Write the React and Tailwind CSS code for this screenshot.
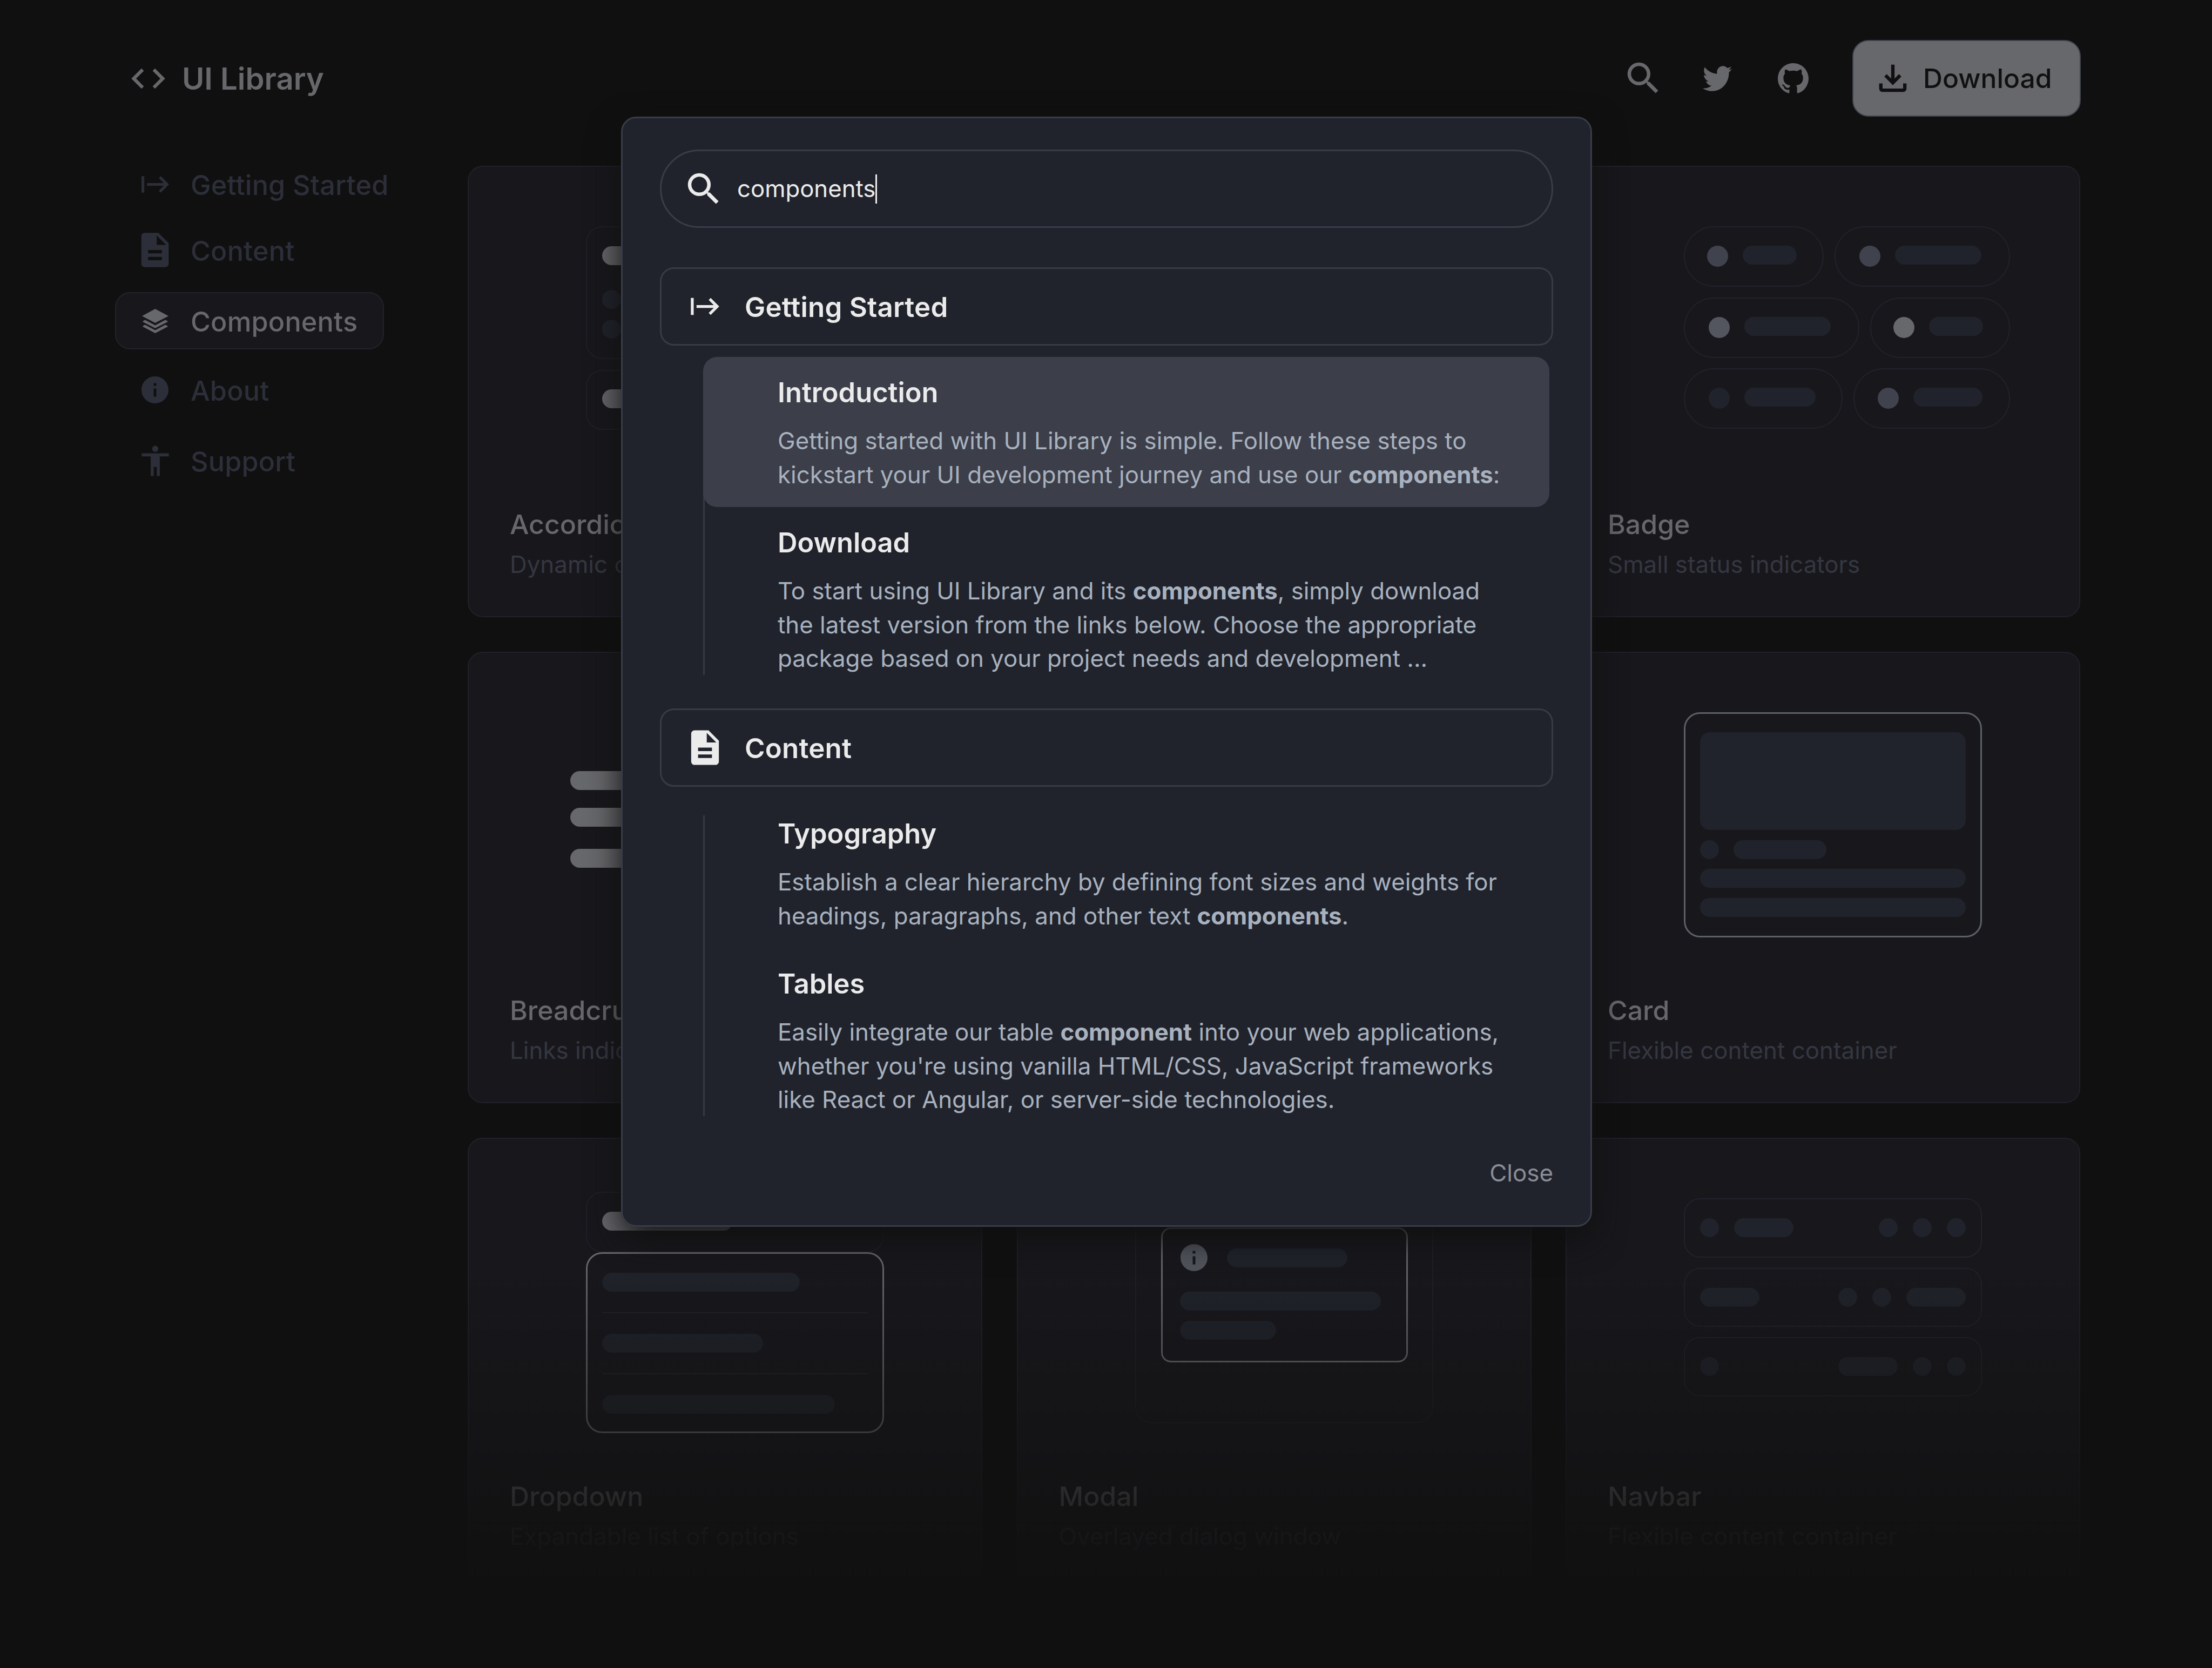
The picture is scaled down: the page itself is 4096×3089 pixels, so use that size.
import React from "react";
import {
  MdAccessibility,
  MdCode,
  MdDescription,
  MdInfo,
  MdOutlineFileDownload,
  MdSearch,
} from "react-icons/md";
import { FaTwitter } from "react-icons/fa";
import { BsGithub } from "react-icons/bs";

const LayersIcon = ({ className }) => (
  <svg viewBox="0 0 173 158" fill="currentColor" className={className}>
    <path d="M86 0 173 46 86 91 0 46z" />
    <path d="M20 72 86 107 152 72 168 80V84L86 126 5 84V80z" />
    <path d="M20 104 86 139 152 104 168 112V116L86 158 5 116V112z" />
  </svg>
);

const StartIcon = ({ className }) => (
  <svg viewBox="0 0 24 24" fill="currentColor" className={className}>
    <path d="M14.59 7.41 18.17 11H6v2h12.17l-3.59 3.59L16 18l6-6-6-6-1.41 1.41zM2 6v12h2V6H2z" />
  </svg>
);

const navItems = [
  { name: "Getting Started", icon: <StartIcon className="size-[61px]" />, className: "" },
  { name: "Content", icon: <MdDescription className="size-[76px]" />, className: "mt-[16px]" },
  { name: "Components", icon: <LayersIcon className="w-[49px] h-[45px]" />, className: "mt-[25px]", active: true },
  { name: "About", icon: <MdInfo className="size-[60px]" />, className: "mt-[22px]" },
  { name: "Support", icon: <MdAccessibility className="size-[67px]" />, className: "mt-[25px]" },
];

const results = [
  {
    title: "Getting Started",
    icon: <StartIcon className="size-[63px]" />,
    items: [
      {
        title: "Introduction",
        active: true,
        lines: [
          "Getting started with UI Library is simple. Follow these steps to",
          <>kickstart your UI development journey and use our <b>components</b>:</>,
        ],
      },
      {
        title: "Download",
        lines: [
          <>To start using UI Library and its <b>components</b>, simply download</>,
          "the latest version from the links below. Choose the appropriate",
          "package based on your project needs and development ...",
        ],
      },
    ],
  },
  {
    title: "Content",
    icon: <MdDescription className="size-[77px]" />,
    items: [
      {
        title: "Typography",
        lines: [
          "Establish a clear hierarchy by defining font sizes and weights for",
          <>headings, paragraphs, and other text <b>components</b>.</>,
        ],
      },
      {
        title: "Tables",
        lines: [
          <>Easily integrate our table <b>component</b> into your web applications,</>,
          "whether you're using vanilla HTML/CSS, JavaScript frameworks",
          "like React or Angular, or server-side technologies.",
        ],
      },
    ],
  },
];

const Bar = ({ className = "bg-[#20232b]" }) => (
  <div className={`h-[35px] shrink-0 rounded-full ${className}`} />
);

const Dot = ({ className = "bg-[#20232b]" }) => (
  <div className={`size-[35px] shrink-0 rounded-full ${className}`} />
);

const Box = ({ className = "", children }) => (
  <div className={`w-[552px] rounded-[30px] ${className}`}>{children}</div>
);

const BadgePill = ({ className, dot, bar }) => (
  <div className={`flex h-[112px] items-start gap-[27px] rounded-full border-2 border-[#21222b] pt-[34px] ${className}`}>
    <div className={`size-[39px] rounded-full ${dot}`} />
    <Bar className={`bg-[#20232b] ${bar}`} />
  </div>
);

const AccordionArt = () => (
  <div className="flex flex-col gap-[20px] pl-[217px] pt-[110px]">
    <Box className="flex h-[246px] flex-col border-2 border-[#1f2028] px-[28px] pt-[35px]">
      <Bar className="w-[242px] bg-[#67686b]" />
      <div className="mt-[46px] flex gap-[20px]"><Dot /><Bar className="w-[240px] bg-[#20232b]" /></div>
      <div className="mt-[20px] flex gap-[20px]"><Dot /><Bar className="w-[240px] bg-[#20232b]" /></div>
    </Box>
    <Box className="h-[111px] border-2 border-[#1f2028] px-[28px] pt-[34px]">
      <Bar className="w-[242px] bg-[#67686b]" />
    </Box>
  </div>
);

const BadgeArt = () => (
  <div className="flex w-[821px] flex-col gap-[19.5px] pl-[217px] pt-[110px]">
    <div className="flex gap-[20px]">
      <BadgePill className="w-[259px] pl-[41px]" dot="bg-[#40434e]" bar="w-[100px]" />
      <BadgePill className="w-[325px] pl-[44px]" dot="bg-[#40434e]" bar="w-[160px]" />
    </div>
    <div className="flex gap-[20px]">
      <BadgePill className="w-[325px] pl-[44px]" dot="bg-[#53565e]" bar="w-[160px]" />
      <BadgePill className="w-[259px] pl-[41px]" dot="bg-[#67686b]" bar="w-[100px]" />
    </div>
    <div className="flex gap-[20px]">
      <BadgePill className="w-[294px] pl-[44px]" dot="bg-[#20232b]" bar="w-[132px]" />
      <BadgePill className="w-[290px] pl-[43px]" dot="bg-[#40434e]" bar="w-[128px]" />
    </div>
  </div>
);

const BreadcrumbArt = () => (
  <div className="pl-[188px] pt-[219px]">
    <Bar className="w-[250px] bg-[#67686b]" />
    <Bar className="mt-[33px] w-[250px] bg-[#67686b]" />
    <Bar className="mt-[41px] w-[250px] bg-[#67686b]" />
  </div>
);

const CardArt = () => (
  <div className="pl-[217px] pt-[110px]">
    <Box className="flex h-[417px] flex-col gap-[18.5px] border-3 border-[#5c5f67] px-[27px] pt-[34px]">
      <div className="h-[181px] rounded-[18px] bg-[#20232b]" />
      <div className="flex gap-[27px]"><Dot /><Bar className="w-[172px] bg-[#20232b]" /></div>
      <Bar />
      <Bar />
    </Box>
  </div>
);

const DropdownArt = () => (
  <div className="pl-[217px] pt-[98px]">
    <Box className="h-[112px] border-2 border-[#1f2028] px-[28px] pt-[35px]">
      <Bar className="w-[242px] bg-[#67686b]" />
    </Box>
    <Box className="flex h-[335px] flex-col gap-[38px] border-3 border-[#67686b] px-[27px] pt-[35px]">
      <Bar className="w-[366px] bg-[#20232b]" />
      <div className="h-[2px] bg-[#22242c]" />
      <Bar className="w-[298px] bg-[#20232b]" />
      <div className="h-[2px] bg-[#22242c]" />
      <Bar className="w-[431px] bg-[#20232b]" />
    </Box>
  </div>
);

const ModalArt = () => (
  <div className="pl-[217px] pt-[110px]">
    <Box className="h-[417px] border-2 border-[#1f2028] pl-[46px] pt-[52px]">
      <div className="h-[250px] w-[457px] rounded-[18px] border-3 border-[#67686b] pl-[32px] pt-[23px]">
        <div className="flex h-[60px] items-center gap-[31px]">
          <MdInfo className="-ml-[4px] size-[60px] text-[#53565e]" />
          <Bar className="w-[223px] bg-[#20232b]" />
        </div>
        <Bar className="mt-[33px] w-[372px] bg-[#20232b]" />
        <Bar className="mt-[19px] w-[178px] bg-[#20232b]" />
      </div>
    </Box>
  </div>
);

const NavbarArt = () => (
  <div className="flex flex-col gap-[19px] pl-[217px] pt-[110px]">
    <Box className="flex h-[109.5px] items-center gap-[28px] border-2 border-[#21222b] px-[28px]">
      <Dot /><Bar className="mr-auto w-[110px] bg-[#20232b]" /><Dot /><Dot /><Dot />
    </Box>
    <Box className="flex h-[109.5px] items-center gap-[28px] border-2 border-[#21222b] px-[28px]">
      <Bar className="mr-auto w-[110px] bg-[#20232b]" /><Dot /><Dot /><Bar className="w-[110px] bg-[#20232b]" />
    </Box>
    <Box className="flex h-[109.5px] items-center gap-[28px] border-2 border-[#21222b] px-[28px]">
      <Dot className="mr-auto bg-[#20232b]" /><Bar className="w-[110px] bg-[#20232b]" /><Dot /><Dot />
    </Box>
  </div>
);

const cards = [
  { name: "Accordion", description: "Dynamic content", art: <AccordionArt /> },
  {},
  { name: "Badge", description: "Small status indicators", art: <BadgeArt /> },
  { name: "Breadcrumb", description: "Links indicating", art: <BreadcrumbArt /> },
  {},
  { name: "Card", description: "Flexible content container", art: <CardArt /> },
  { name: "Dropdown", description: "Expandable list of options", art: <DropdownArt /> },
  { name: "Modal", description: "Overlayed dialog window", art: <ModalArt /> },
  { name: "Navbar", description: "Flexible content container", art: <NavbarArt /> },
];

const Header = () => (
  <header className="flex h-[142px] items-center pl-[237px] pr-[243px] text-[#67686b]">
    <MdCode className="size-[75px]" />
    <span className="ml-[25px] pt-[2px] text-[56.2px] font-semibold">UI Library</span>
    <MdSearch className="ml-auto size-[78px]" />
    <FaTwitter preserveAspectRatio="none" className="ml-[71px] h-[57px] w-[54px]" />
    <BsGithub className="ml-[85px] size-[57px]" />
    <button className="ml-[81px] flex h-[142px] w-[423px] items-center gap-[18px] rounded-[30px] border-2 border-[#41444e] bg-[#67686b] pl-[35px] text-[49.8px] font-medium text-[#101010]">
      <MdOutlineFileDownload className="size-[76px]" />
      <span className="pt-px">Download</span>
    </button>
  </header>
);

const SideBar = () => (
  <nav className="w-[653px] shrink-0">
    {navItems.map((item) => (
      <div
        key={item.name}
        className={`flex h-[106px] w-[498px] items-center gap-[28px] rounded-[28px] border-2 pl-[34px] text-[50.3px] font-medium tracking-[0.2px] whitespace-nowrap ${item.className} ${
          item.active ? "border-[#22232c] bg-[#18171c] text-[#67686b]" : "border-transparent text-[#2c2f39]"
        }`}
      >
        <span className="flex w-[76px] shrink-0 justify-center">{item.icon}</span>
        <span className="pt-[3px]">{item.name}</span>
      </div>
    ))}
  </nav>
);

const SearchDialog = () => (
  <div className="absolute inset-0 flex items-start justify-center pl-[2px] pt-[216px]">
    <div className="h-[2056px] w-[1798px] rounded-[28px] border-3 border-[#383c47] bg-[#20232c] px-[69px] pt-[58px] shadow-[0_22px_60px_#101010]">
      {/* Search field */}
      <div className="flex h-[145px] items-center rounded-full border-3 border-[#3a3d48] pl-[39px] text-[#ebebeb]">
        <MdSearch className="size-[78px]" />
        <span className="ml-[23px] pt-px text-[43.7px]">components</span>
        <span className="h-[54px] w-[3px] bg-[#ebebeb]" />
      </div>

      {/* Results */}
      <div className="mt-[73px] flex flex-col gap-[32px]">
        {results.map((group) => (
          <section key={group.title}>
            <h2 className="flex h-[145px] items-center gap-[35px] rounded-[26px] border-3 border-[#383b46] pl-[41px] text-[51px] font-semibold tracking-[0.2px] text-[#ebebeb]">
              <span className="flex w-[78px] justify-center">{group.icon}</span>
              <span className="pt-[3px]">{group.title}</span>
            </h2>
            <div className="relative ml-[80px] mt-[21px] w-[1567px]">
              <div className="absolute bottom-[30px] left-0 top-[32px] w-[3px] bg-[#363944]" />
              {group.items.map((item) => (
                <div
                  key={item.title}
                  className={`relative rounded-[26px] pb-[28px] pl-[138px] pt-[36px] whitespace-nowrap ${item.active ? "bg-[#3c3e49]" : ""}`}
                >
                  <h3 className="text-[50.6px] font-semibold leading-[60px] text-[#ebebeb]">{item.title}</h3>
                  <div className="mt-[29px] text-[43.8px] leading-[62.6px] text-[#a8b1be]">
                    {item.lines.map((line, index) => (
                      <p key={index}>{line}</p>
                    ))}
                  </div>
                </div>
              ))}
            </div>
          </section>
        ))}
      </div>

      <p className="mt-[45px] text-right text-[43.9px] leading-[60px] text-[#8b8d96]">Close</p>
    </div>
  </div>
);

const App = () => {
  return (
    <div className="relative h-[3089px] w-[4096px] overflow-hidden bg-[#101010] pt-[74px] font-[Inter,sans-serif]">
      <Header />
      <div className="flex pl-[213px] pt-[72px]">
        <SideBar />

        {/* Component cards */}
        <main className="relative mt-[19px] grid grid-cols-[953px_953px_953px] gap-x-[63.5px] gap-y-[64px]">
          {cards.map((card, index) => (
            <div key={index} className="h-[836px] rounded-[28px] border-2 border-[#20212a] bg-[#18171c] whitespace-nowrap">
              <div className="h-[632px]">{card.art}</div>
              <h2 className="pl-[76px] text-[50px] font-medium leading-[60px] text-[#67686b]">{card.name}</h2>
              <p className="mt-[14px] pl-[76px] text-[43.9px] leading-[60px] text-[#343741]">{card.description}</p>
            </div>
          ))}
          {/* Last row fades into the page */}
          <div className="absolute -inset-x-1 bottom-0 h-[620px] bg-linear-to-b from-[#10101000] to-[#101010]" />
        </main>
      </div>
      <SearchDialog />
    </div>
  );
};

export default App;
